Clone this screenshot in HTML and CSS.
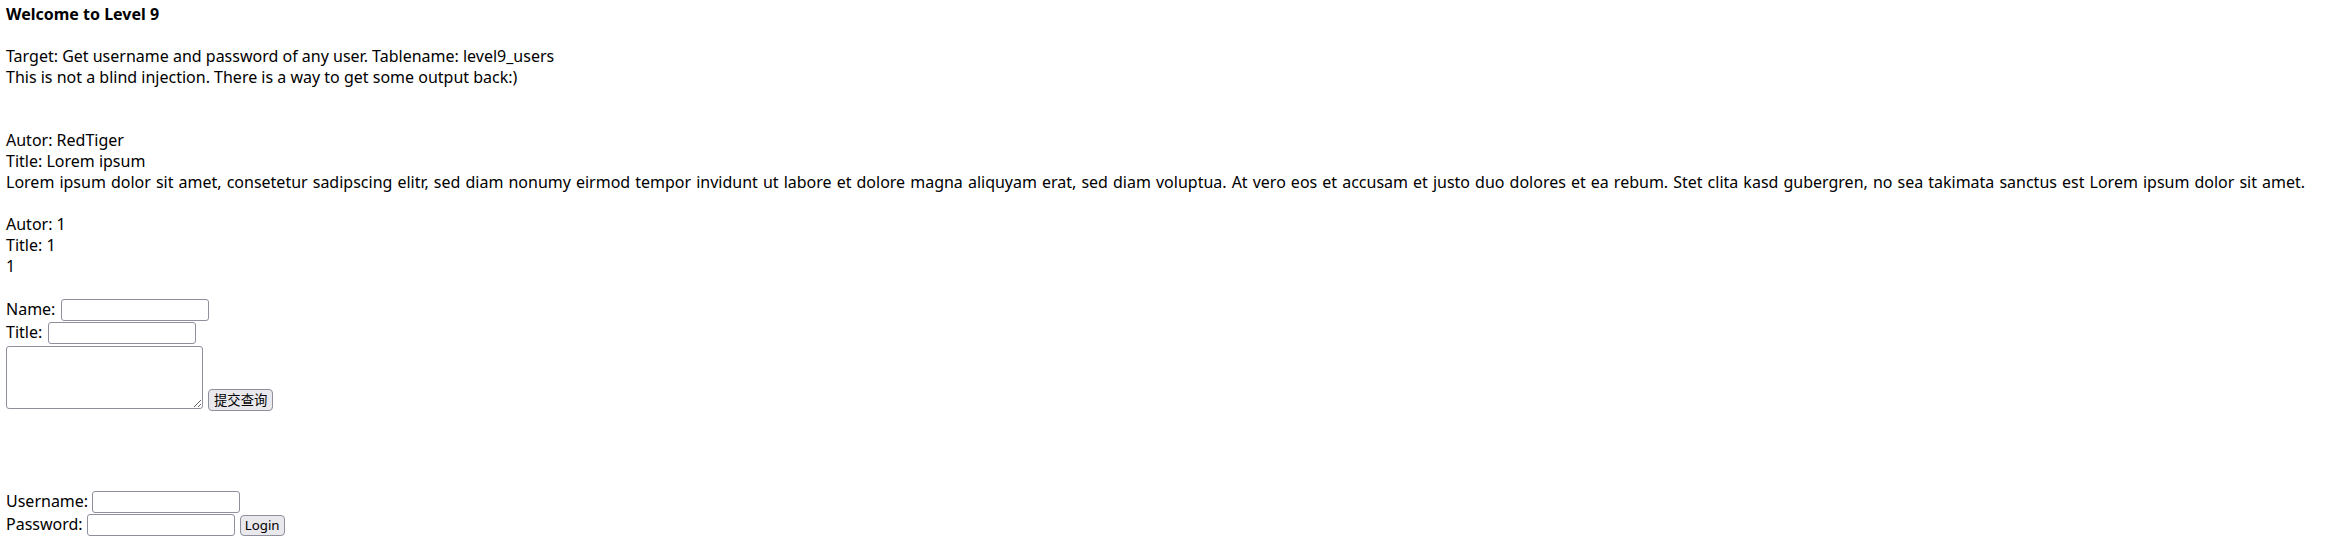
FILE: index.html
```html
<!DOCTYPE html>
<html>
<head>
<meta charset="utf-8">
<title>Level 9</title>
<link rel="stylesheet" href="styles.css">
</head>
<body>
<div class="page">
  <section class="intro">
    <b class="heading">Welcome to Level 9</b><br><br>
    Target: Get username and password of any user. Tablename: level9_users<br>
    This is not a blind injection. There is a way to get some output back:)<br><br><br>
    Autor: RedTiger<br>
    Title: Lorem ipsum<br>
    <span class="lorem">Lorem ipsum dolor sit amet, consetetur sadipscing elitr, sed diam nonumy eirmod tempor invidunt ut labore et dolore magna aliquyam erat, sed diam voluptua. At vero eos et accusam et justo duo dolores et ea rebum. Stet clita kasd gubergren, no sea takimata sanctus est Lorem ipsum dolor sit amet.</span><br><br>
    Autor: 1<br>
    Title: 1<br>
    1<br><br>
  </section>

  <form class="post-form" action="#" method="post">
    <div class="frow"><span class="label label-wide">Name:</span><input class="field" type="text" name="autor"></div>
    <div class="frow"><span class="label label-wide">Title:</span><input class="field" type="text" name="title"></div>
    <div class="compose">
      <textarea class="text-area" name="text"></textarea>
      <button class="btn btn-submit" type="button">提交查询</button>
    </div>
  </form>

  <form class="login-form" action="#" method="post">
    <div class="frow"><span class="label label-tight">Username:</span><input class="field" type="text" name="user"></div>
    <div class="frow"><span class="label label-tight">Password:</span><input class="field" type="password" name="password"><button class="btn btn-login" type="button">Login</button></div>
  </form>
</div>
</body>
</html>
```
FILE: styles.css
```css
html, body {
  margin: 0;
  padding: 0;
  background: #ffffff;
}

.page {
  margin: 4px 0 0 6px;
  font-family: "Noto Sans", "Noto Sans CJK SC", sans-serif;
  font-size: 16px;
  line-height: 21px;
  color: #000000;
}

.intro {
  white-space: nowrap;
}

.heading {
  font-weight: 700;
}

.lorem {
  word-spacing: 0.9px;
}

.post-form {
  margin: 1px 0 0 0;
}

.frow {
  display: flex;
  align-items: baseline;
  height: 23px;
}

.label {
  white-space: pre;
  margin-right: 4.5px;
}

.label-wide {
  margin-right: 5.5px;
}

.label-tight {
  margin-right: 4px;
}

.field {
  box-sizing: border-box;
  width: 148px;
  height: 22px;
  margin: 0;
  padding: 1px 3px;
  border: 1px solid #8f8f9d;
  border-radius: 3px;
  background: #ffffff;
  font-family: "Noto Sans", sans-serif;
  font-size: 13.333px;
  color: #000000;
}

.compose {
  display: flex;
  align-items: flex-end;
  gap: 5px;
  margin-top: 1px;
}

.text-area {
  box-sizing: border-box;
  width: 197px;
  height: 63px;
  margin: 0;
  padding: 2px;
  border: 1px solid #8f8f9d;
  border-radius: 3px;
  background: #ffffff;
  font-family: "Liberation Mono", monospace;
  font-size: 13.333px;
  resize: both;
}

.btn {
  box-sizing: border-box;
  height: 22px;
  margin: 0;
  padding: 0 5px;
  border: 1px solid #8f8f9d;
  border-radius: 4px;
  background: #e9e9ed;
  color: #000000;
  font-size: 13.333px;
  line-height: 18px;
}

.btn-submit {
  font-family: "Noto Sans CJK SC", sans-serif;
  margin-bottom: -2px;
}

.btn-login {
  font-family: "Noto Sans", sans-serif;
  height: 21px;
  padding: 0 4px;
  margin-left: 5px;
}

.login-form {
  margin-top: 82px;
}
```
